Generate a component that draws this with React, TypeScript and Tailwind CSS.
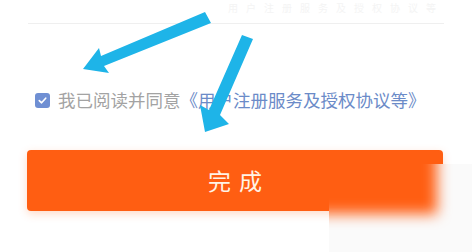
import React from "react";

export default function App() {
  return (
    <div className="relative w-[472px] h-[252px] bg-white overflow-hidden" style={{ fontFamily: '"Noto Sans CJK SC", "Noto Sans", sans-serif' }}>
      <div className="h-[24px] mx-[28px] pt-[2px] border-b border-[#efefef] flex justify-end items-start">
        <span className="text-[10px] leading-[12px] text-[#f4f4f4] tracking-[8px] whitespace-nowrap">用户注册服务及授权协议等</span>
      </div>
      <div className="flex items-center pl-[35px] mt-[68px] h-[16px]">
        <div className="w-[15px] h-[15px] rounded-[3px] bg-[#6f8fd3] flex items-center justify-center">
          <svg width="11" height="11" viewBox="0 0 12 12">
            <path d="M2.5 6.2 L5 8.5 L9.5 3.5" fill="none" stroke="white" strokeWidth="1.8" strokeLinecap="round" strokeLinejoin="round" />
          </svg>
        </div>
        <span className="ml-[8px] text-[17.5px] text-[#a3a3a3] whitespace-nowrap">我已阅读并同意</span>
        <span className="text-[17.5px] text-[#6b8bc8] whitespace-nowrap">《用户注册服务及授权协议等》</span>
      </div>
      <div className="mx-[27px] mt-[42px] w-[416px] h-[61px] rounded-[4px] bg-[#ff5e12] shadow-[0_3px_8px_rgba(255,110,40,0.25)] flex items-center justify-center">
        <span className="text-[23px] text-[#fff3e6] tracking-[8px] pl-[8px]">完成</span>
      </div>
      <div className="absolute left-[329px] top-[164px] w-[143px] h-[88px] overflow-hidden bg-[#fafafa]">
        <div className="absolute left-[-20px] top-[-20px] w-[128px] h-[70px] bg-[#ff5e12] blur-[7px]" />
      </div>
      <svg className="absolute left-0 top-0" width="472" height="252" viewBox="0 0 472 252">
        <g fill="#1eb4e8">
          <path d="M205 12 L211 23 L104 66 L109 73 L83 69 L99 48 L101 56 Z" />
          <path d="M242 35 L253 39 L220 115 L229 124 L205 132 L200 105 L209 110 Z" />
        </g>
      </svg>
    </div>
  );
}
